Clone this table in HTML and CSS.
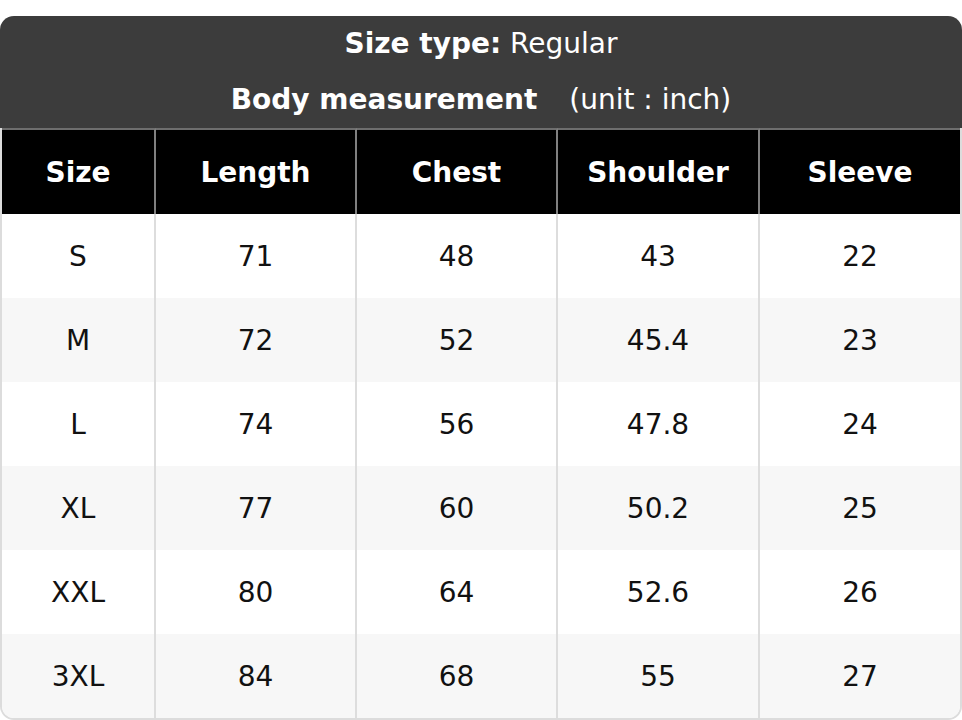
FILE: index.html
```html
<!DOCTYPE html>
<html lang="en">
<head>
<meta charset="utf-8">
<title>Size chart</title>
<link rel="stylesheet" href="styles.css">
</head>
<body>
<div class="chart">
  <div class="title">
    <div class="title-line"><b>Size type:</b> Regular</div>
    <div class="title-line"><b>Body measurement</b><span class="unit">(unit : inch)</span></div>
  </div>
  <table class="sizes">
    <thead>
      <tr>
        <th class="c1">Size</th>
        <th class="c2">Length</th>
        <th class="c3">Chest</th>
        <th class="c4">Shoulder</th>
        <th class="c5">Sleeve</th>
      </tr>
    </thead>
    <tbody>
      <tr><td>S</td><td>71</td><td>48</td><td>43</td><td>22</td></tr>
      <tr><td>M</td><td>72</td><td>52</td><td>45.4</td><td>23</td></tr>
      <tr><td>L</td><td>74</td><td>56</td><td>47.8</td><td>24</td></tr>
      <tr><td>XL</td><td>77</td><td>60</td><td>50.2</td><td>25</td></tr>
      <tr><td>XXL</td><td>80</td><td>64</td><td>52.6</td><td>26</td></tr>
      <tr><td>3XL</td><td>84</td><td>68</td><td>55</td><td>27</td></tr>
    </tbody>
  </table>
</div>
</body>
</html>
```

FILE: styles.css
```css
html, body {
  margin: 0;
  padding: 0;
  background: #ffffff;
}

body {
  padding-top: 16px;
  font-family: "DejaVu Sans", "Liberation Sans", sans-serif;
  font-size: 28px;
  color: #111111;
}

.chart {
  width: 962px;
}

.title {
  background: #3c3c3c;
  color: #ffffff;
  border-radius: 14px 14px 0 0;
  text-align: center;
}

.title-line {
  height: 56px;
  line-height: 56px;
  white-space: nowrap;
}

.title-line b {
  font-weight: bold;
}

.unit {
  margin-left: 32px;
}

.sizes {
  width: 962px;
  border-spacing: 0;
  table-layout: fixed;
  border-left: 2px solid #dcdcdc;
  border-right: 2px solid #dcdcdc;
  border-bottom: 2px solid #dcdcdc;
  border-radius: 0 0 14px 14px;
}

.sizes th,
.sizes td {
  box-sizing: border-box;
  padding: 0;
  text-align: center;
  vertical-align: middle;
  white-space: nowrap;
}

.sizes th {
  height: 86px;
  background: #000000;
  color: #ffffff;
  font-weight: bold;
  border-top: 2px solid #6e6e6e;
  border-right: 2px solid #808080;
}

.sizes th:last-child {
  border-right: none;
}

.c1 { width: 154px; }
.c2 { width: 201px; }
.c3 { width: 201px; }
.c4 { width: 202px; }
.c5 { width: 200px; }

.sizes td {
  height: 84px;
  font-weight: normal;
  border-right: 2px solid #dddddd;
  background: #ffffff;
}

.sizes td:last-child {
  border-right: none;
}

.sizes tbody tr:nth-child(even) td {
  background: #f7f7f7;
}

.sizes tbody tr:last-child td:first-child {
  border-bottom-left-radius: 12px;
}

.sizes tbody tr:last-child td:last-child {
  border-bottom-right-radius: 12px;
}
```
